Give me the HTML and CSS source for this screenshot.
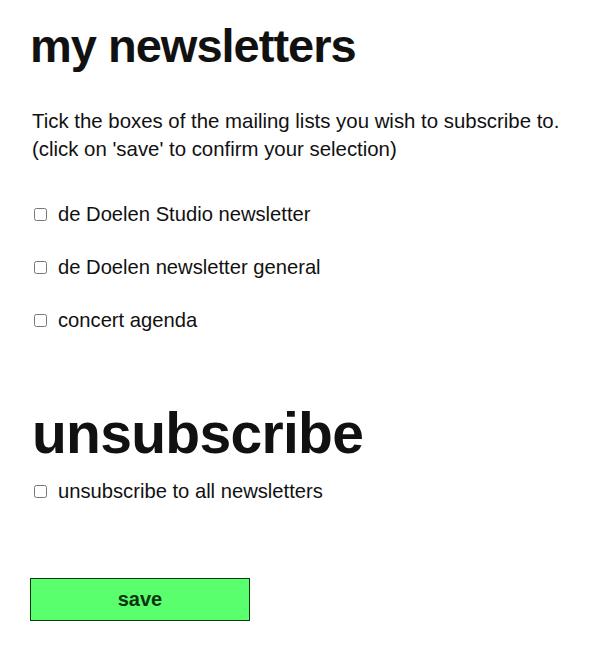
FILE: index.html
```html
<!DOCTYPE html>
<html>
	<head>
		<meta charset="utf-8">
		<title>my newsletters</title>
		<link rel="stylesheet" href="styles.css">
	</head>
	<body>
		<form class="newsletters">
			<h1 class="title">my newsletters</h1>
			<p class="intro">Tick the boxes of the mailing lists you wish to subscribe to.<br>(click on 'save' to confirm your selection)</p>
			<ul class="lists">
				<li class="item"><label><input type="checkbox"> de Doelen Studio newsletter</label></li>
				<li class="item"><label><input type="checkbox"> de Doelen newsletter general</label></li>
				<li class="item"><label><input type="checkbox"> concert agenda</label></li>
			</ul>
			<h2 class="title big">unsubscribe</h2>
			<ul class="lists">
				<li class="item"><label><input type="checkbox"> unsubscribe to all newsletters</label></li>
			</ul>
			<button class="save" type="button">save</button>
		</form>
	</body>
</html>
```

FILE: styles.css
```css
* {
	margin: 0;
	padding: 0;
}

ul {
	list-style: none;
}

body {
	font-family: "Liberation Sans", Arial, sans-serif;
	color: #111;
	background: #fff;
}

.newsletters {
	padding: 20px 30px;
}

.title {
	font-size: 47px;
	font-weight: bold;
	line-height: 52px;
	letter-spacing: -1px;
}

.title.big {
	font-size: 57px;
	line-height: 64px;
	letter-spacing: -0.7px;
	margin: 69px 0 0 2px;
}

.intro {
	font-size: 20.4px;
	line-height: 28px;
	margin: 35px 0 0 2px;
}

.lists {
	margin-top: 39px;
}

.lists .item {
	font-size: 20.2px;
	line-height: 24px;
	margin-bottom: 29px;
}

.lists .item label {
	display: flex;
	align-items: center;
	gap: 11px;
}

.lists .item input {
	width: 13px;
	height: 13px;
	margin-left: 4px;
}

.big + .lists {
	margin-top: 14px;
}

.save {
	display: block;
	width: 220px;
	height: 43px;
	margin-top: 75px;
	background: #5aff6e;
	border: 1px solid #0a3a10;
	font-family: "Liberation Sans", Arial, sans-serif;
	font-size: 20px;
	font-weight: bold;
	color: #0d3310;
}
```
